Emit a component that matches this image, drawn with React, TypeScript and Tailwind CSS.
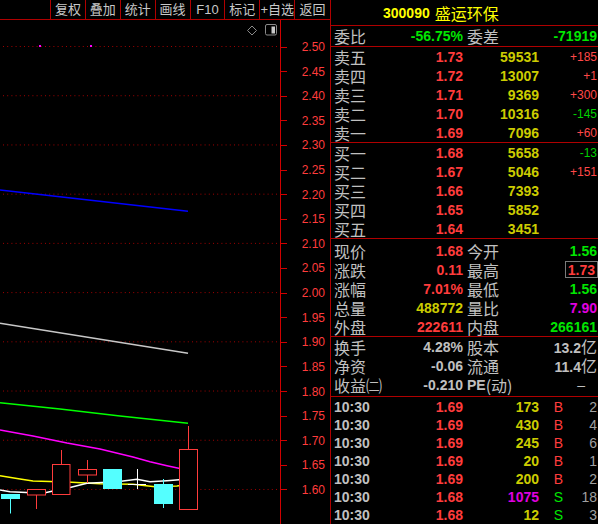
import React from "react";

const NUM = "font-['Liberation_Sans',Arial,sans-serif] font-bold text-[14px] leading-none";
const SMALL = "font-['Liberation_Sans',Arial,sans-serif] text-[12px] leading-none";
const CJK = "inline-flex h-[17px] items-center overflow-visible font-['Noto_Sans_CJK_SC',sans-serif] text-[16px] leading-none text-[#c0c0c0]";

const RED = "text-[#ff3c3c]";
const GREEN = "text-[#00e600]";
const YEL = "text-[#cccc00]";
const GRAY = "text-[#c0c0c0]";
const MAG = "text-[#e000e0]";

const buttons = ["复权", "叠加", "统计", "画线", "F10", "标记", "+自选", "返回"];

const py = (p: number) => 46.5 + ((2.5 - p) / 0.05) * 24.61;
const levels = Array.from({ length: 19 }, (_, i) => +(2.5 - i * 0.05).toFixed(2));

function Chart() {
  const pts = (a: number[][]) => a.map((p) => p.join(",")).join(" ");
  return (
    <svg width="330" height="504" viewBox="0 20 330 504" className="block">
      {/* grid + axis */}
      {levels.map((p, i) => (
        <g key={p}>
          {i % 2 === 0 && (
            <line x1="3" x2="278" y1={py(p)} y2={py(p)} stroke="#a00000" strokeDasharray="1 3.2" />
          )}
          <line x1="281" x2="287" y1={Math.round(py(p)) + 0.5} y2={Math.round(py(p)) + 0.5} stroke="#d00000" />
          <text
            x="325"
            y={py(p) + 4.5}
            textAnchor="end"
            fontFamily="'Liberation Sans', Arial, sans-serif"
            fontSize="12"
            fill="#ff3c3c"
          >
            {p.toFixed(2)}
          </text>
        </g>
      ))}
      <line x1="280.5" x2="280.5" y1="20" y2="524" stroke="#d00000" />
      <rect x="39" y="45" width="2" height="2" fill="#ff00ff" />
      <rect x="90" y="45" width="2" height="2" fill="#ff00ff" />

      {/* top icons */}
      <path d="M252 26 L256.5 30.5 L252 35 L247.5 30.5 Z" fill="none" stroke="#8a8a8a" />
      <rect x="265.5" y="24.5" width="11" height="10.5" rx="1.5" fill="none" stroke="#8a8a8a" />
      <rect x="271.5" y="26.5" width="3.5" height="7" fill="#c8c8c8" />

      {/* moving averages */}
      <line x1="0" y1="190" x2="188" y2="211.3" stroke="#0000ff" strokeWidth="1.4" />
      <line x1="0" y1="323.3" x2="188" y2="353.3" stroke="#c8c8c8" strokeWidth="1.4" />
      <polyline points={pts([[0, 402.7], [60, 409], [120, 416], [188, 423.3]])} fill="none" stroke="#00ff00" strokeWidth="1.4" />
      <polyline
        points={pts([[0, 430], [33, 436], [67, 443], [100, 449], [133, 457], [150, 461.7], [167, 465.7], [188, 470.3]])}
        fill="none"
        stroke="#ff00ff"
        strokeWidth="1.4"
      />
      <polyline
        points={pts([[0, 475.7], [20, 479], [33, 481], [67, 482], [100, 483.7], [133, 484.3], [155, 486.7], [177, 486], [188, 484.3]])}
        fill="none"
        stroke="#ffff00"
        strokeWidth="1.4"
      />
      <polyline
        points={pts([[0, 490], [10, 491.7], [43, 493.3], [53, 491], [67, 488.3], [87, 483.3], [117, 481.7], [137, 479.3], [150, 481.7], [167, 480.7], [188, 479]])}
        fill="none"
        stroke="#ffffff"
        strokeWidth="1.4"
      />

      {/* candles */}
      <line x1="10.5" y1="498" x2="10.5" y2="513.5" stroke="#54ffff" />
      <rect x="1" y="494" width="19" height="5" fill="#54ffff" />

      <line x1="36.5" y1="495" x2="36.5" y2="509" stroke="#ff3c3c" />
      <rect x="27.5" y="489.5" width="18" height="5.5" fill="#000" stroke="#ff3c3c" />

      <line x1="61.5" y1="450" x2="61.5" y2="464.5" stroke="#ff3c3c" />
      <rect x="52.5" y="464.5" width="17.5" height="30" fill="#000" stroke="#ff3c3c" />

      <line x1="87.5" y1="460" x2="87.5" y2="483" stroke="#ff3c3c" />
      <rect x="78.5" y="469.5" width="18" height="5.5" fill="#000" stroke="#ff3c3c" />

      <rect x="103" y="469" width="19" height="20" fill="#54ffff" />

      <line x1="128" y1="484.5" x2="146" y2="484.5" stroke="#ffffff" />
      <line x1="137.5" y1="469" x2="137.5" y2="489" stroke="#ffffff" />

      <line x1="163.5" y1="479" x2="163.5" y2="508" stroke="#54ffff" />
      <rect x="154" y="484" width="19" height="20" fill="#54ffff" />

      <line x1="188.5" y1="426" x2="188.5" y2="449.5" stroke="#ff3c3c" />
      <rect x="179.5" y="449.5" width="18" height="60" fill="#000" stroke="#ff3c3c" />
    </svg>
  );
}

type Book = { label: string; price: string; vol: string; chg?: string; up?: boolean };

const sells: Book[] = [
  { label: "卖五", price: "1.73", vol: "59531", chg: "+185", up: true },
  { label: "卖四", price: "1.72", vol: "13007", chg: "+1", up: true },
  { label: "卖三", price: "1.71", vol: "9369", chg: "+300", up: true },
  { label: "卖二", price: "1.70", vol: "10316", chg: "-145", up: false },
  { label: "卖一", price: "1.69", vol: "7096", chg: "+60", up: true },
];

const buys: Book[] = [
  { label: "买一", price: "1.68", vol: "5658", chg: "-13", up: false },
  { label: "买二", price: "1.67", vol: "5046", chg: "+151", up: true },
  { label: "买三", price: "1.66", vol: "7393" },
  { label: "买四", price: "1.65", vol: "5852" },
  { label: "买五", price: "1.64", vol: "3451" },
];

const trades = [
  { price: "1.69", vol: "173", side: "B", n: "2" },
  { price: "1.69", vol: "430", side: "B", n: "4" },
  { price: "1.69", vol: "245", side: "B", n: "6" },
  { price: "1.69", vol: "20", side: "B", n: "1" },
  { price: "1.69", vol: "200", side: "B", n: "2" },
  { price: "1.68", vol: "1075", side: "S", n: "18" },
  { price: "1.68", vol: "12", side: "S", n: "3" },
];

function BookRow({ r }: { r: Book }) {
  return (
    <div className="grid h-[19px] grid-cols-[132px_76px_59px] items-center">
      <div className="flex items-center justify-between pl-[3px]">
        <span className={CJK}>{r.label}</span>
        <span className={`${NUM} ${RED}`}>{r.price}</span>
      </div>
      <span className={`${NUM} ${YEL} text-right`}>{r.vol}</span>
      <span className={`${SMALL} ${r.up ? "text-[#ff4848]" : "text-[#00d000]"} pr-[1px] text-right`}>{r.chg}</span>
    </div>
  );
}

function InfoRow({
  l1,
  v1,
  c1,
  l2,
  v2,
  c2,
  boxed,
}: {
  l1: React.ReactNode;
  v1: React.ReactNode;
  c1: string;
  l2: React.ReactNode;
  v2: React.ReactNode;
  c2: string;
  boxed?: boolean;
}) {
  return (
    <div className="grid h-[19px] grid-cols-[132px_135px] items-center">
      <div className="flex items-center justify-between pl-[3px]">
        <span className={CJK}>{l1}</span>
        <span className={`${NUM} ${c1}`}>{v1}</span>
      </div>
      <div className="flex items-center justify-between pl-[4px]">
        <span className={CJK}>{l2}</span>
        {boxed ? (
          <div className="flex h-[17px] items-center border border-solid border-[#7a7a7a] px-[2px]">
            <span className={`${NUM} ${c2}`}>{v2}</span>
          </div>
        ) : (
          <span className={`${NUM} ${c2} pr-[1px]`}>{v2}</span>
        )}
      </div>
    </div>
  );
}

const yi = <span className="font-['Noto_Sans_CJK_SC',sans-serif] font-normal text-[16px]">亿</span>;

export default function App() {
  return (
    <div className="flex h-[524px] w-[598px] overflow-hidden bg-black">
      {/* left: toolbar + chart */}
      <div className="flex w-[330px] flex-col">
        <div className="flex h-[20px] border-b border-[#b00000] pl-[50px]">
          {buttons.map((b, i) => (
            <div
              key={b}
              className={`flex items-center justify-center border-l border-[#b00000] font-['Liberation_Sans','Noto_Sans_CJK_SC',sans-serif] text-[13px] leading-none text-[#c8c8c8] ${
                i === buttons.length - 1 ? "w-[36px]" : "w-[35px]"
              }`}
            >
              {b}
            </div>
          ))}
        </div>
        <Chart />
      </div>

      {/* right: quote panel */}
      <div className="flex w-[268px] flex-col border-l border-[#b00000]">
        <div className="flex h-[26px] items-center gap-[5px] border-b border-[#b00000] pl-[52px] text-[#ffff00]">
          <span className="font-['Liberation_Sans',Arial,sans-serif] text-[14px] font-bold leading-none">300090</span>
          <span className="font-['Noto_Sans_CJK_SC',sans-serif] text-[16px] leading-none">盛运环保</span>
        </div>

        <div className="grid h-[21px] grid-cols-[132px_135px] items-center border-b border-[#b00000]">
          <div className="flex items-center justify-between pl-[3px]">
            <span className={CJK}>委比</span>
            <span className={`${NUM} ${GREEN}`}>-56.75%</span>
          </div>
          <div className="flex items-center justify-between pl-[4px]">
            <span className={CJK}>委差</span>
            <span className={`${NUM} ${GREEN} pr-[1px]`}>-71919</span>
          </div>
        </div>

        <div className="border-b border-[#b00000]">
          {sells.map((r) => (
            <BookRow key={r.label} r={r} />
          ))}
        </div>

        <div className="border-b border-[#b00000]">
          {buys.map((r) => (
            <BookRow key={r.label} r={r} />
          ))}
        </div>

        <div className="border-b border-[#b00000] pt-[2px]">
          <InfoRow l1="现价" v1="1.68" c1={RED} l2="今开" v2="1.56" c2={GREEN} />
          <InfoRow l1="涨跌" v1="0.11" c1={RED} l2="最高" v2="1.73" c2={RED} boxed />
          <InfoRow l1="涨幅" v1="7.01%" c1={RED} l2="最低" v2="1.56" c2={GREEN} />
          <InfoRow l1="总量" v1="488772" c1={YEL} l2="量比" v2="7.90" c2={MAG} />
          <InfoRow l1="外盘" v1="222611" c1={RED} l2="内盘" v2="266161" c2={GREEN} />
        </div>

        <div className="border-b border-[#b00000] pb-[2px]">
          <InfoRow l1="换手" v1="4.28%" c1={GRAY} l2="股本" v2={<>13.2{yi}</>} c2={GRAY} />
          <InfoRow l1="净资" v1="-0.06" c1={GRAY} l2="流通" v2={<>11.4{yi}</>} c2={GRAY} />
          <InfoRow
            l1="收益㈡"
            v1="-0.210"
            c1={GRAY}
            l2={
              <>
                <span className="font-['Liberation_Sans',Arial,sans-serif] font-bold text-[14px]">PE</span>(动)
              </>
            }
            v2={<span className="pr-[12px] font-normal">–</span>}
            c2={GRAY}
          />
        </div>

        <div className="pt-[1px]">
          {trades.map((t, i) => (
            <div key={i} className="grid h-[18px] grid-cols-[132px_76px_25px_34px] items-center">
              <div className="flex items-center justify-between pl-[3px]">
                <span className={`${NUM} ${GRAY}`}>10:30</span>
                <span className={`${NUM} ${RED}`}>{t.price}</span>
              </div>
              <span className={`${NUM} ${t.vol === "1075" ? MAG : YEL} text-right`}>{t.vol}</span>
              <span
                className={`font-['Liberation_Sans',Arial,sans-serif] text-[14px] leading-none pr-[1px] text-right ${
                  t.side === "B" ? "text-[#ff3c3c]" : "text-[#00e600]"
                }`}
              >
                {t.side}
              </span>
              <span className="font-['Liberation_Sans',Arial,sans-serif] text-[14px] leading-none pr-[1px] text-right text-[#a0a0a0]">
                {t.n}
              </span>
            </div>
          ))}
        </div>
      </div>
    </div>
  );
}
